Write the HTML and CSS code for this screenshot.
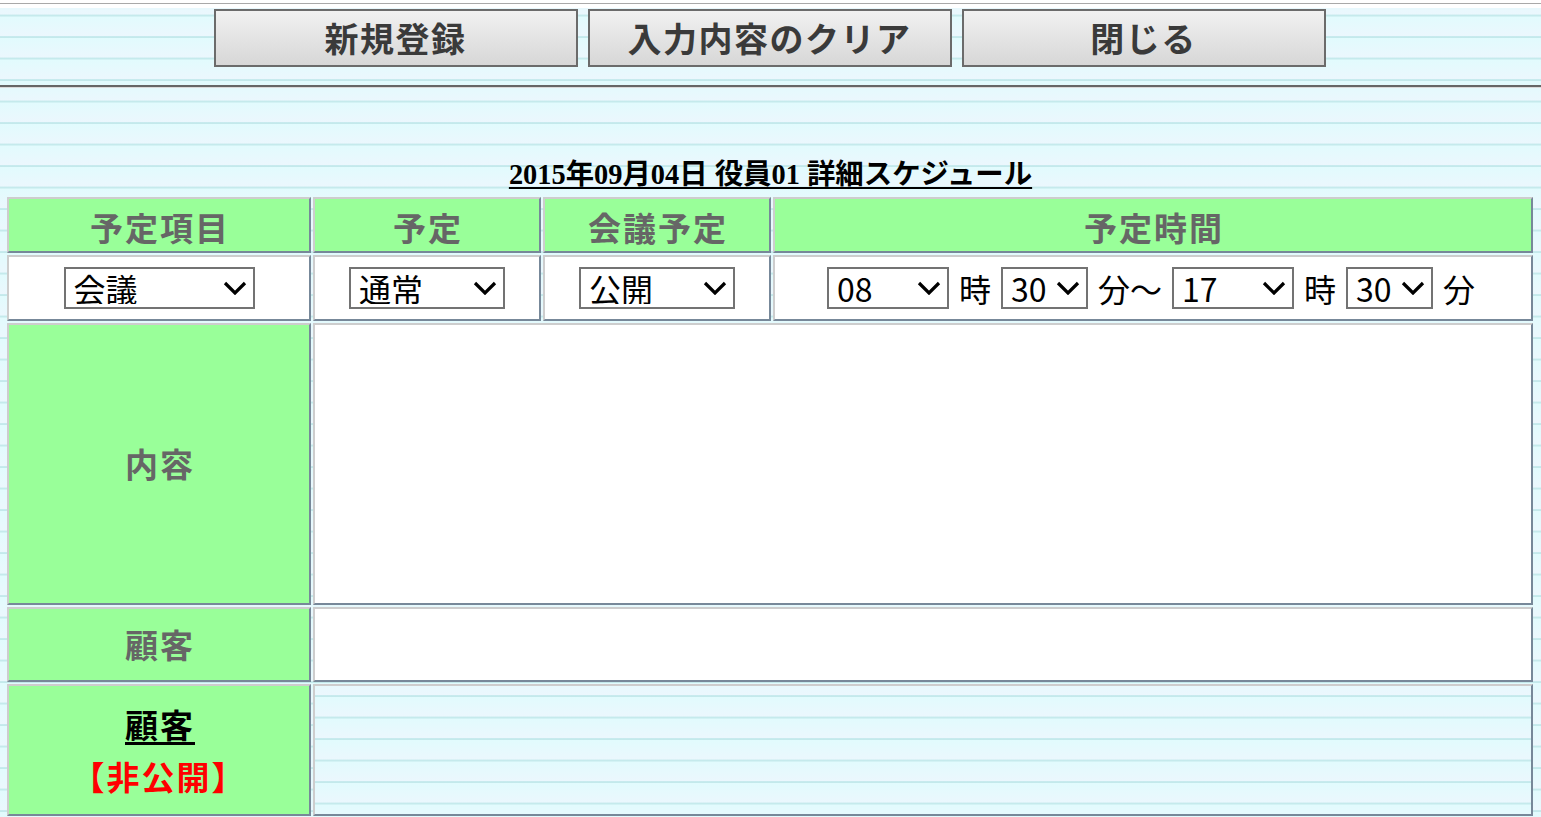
FILE: index.html
```html
<!DOCTYPE html>
<html lang="ja">
<head>
<meta charset="utf-8">
<title>詳細スケジュール</title>
<link rel="stylesheet" href="styles.css">
</head>
<body>
<div class="topstrip"></div>
<header class="toolbar">
  <button class="tbtn" type="button">新規登録</button>
  <button class="tbtn" type="button">入力内容のクリア</button>
  <button class="tbtn" type="button">閉じる</button>
</header>
<div class="rule"></div>
<main class="content">
  <h1 class="title">2015年09月04日 役員01 詳細スケジュール</h1>
  <div class="sched">
    <div class="cell head">予定項目</div>
    <div class="cell head">予定</div>
    <div class="cell head">会議予定</div>
    <div class="cell head">予定時間</div>

    <div class="cell field">
      <span class="sel sel-item"><select><option>会議</option></select><svg class="chev" viewBox="0 0 24 14"><path d="M2 2 L12 12 L22 2"/></svg></span>
    </div>
    <div class="cell field">
      <span class="sel sel-sm"><select><option>通常</option></select><svg class="chev" viewBox="0 0 24 14"><path d="M2 2 L12 12 L22 2"/></svg></span>
    </div>
    <div class="cell field">
      <span class="sel sel-sm"><select><option>公開</option></select><svg class="chev" viewBox="0 0 24 14"><path d="M2 2 L12 12 L22 2"/></svg></span>
    </div>
    <div class="cell field time">
      <span class="sel sel-hour"><select><option>08</option></select><svg class="chev" viewBox="0 0 24 14"><path d="M2 2 L12 12 L22 2"/></svg></span>
      <span class="unit">時</span>
      <span class="sel sel-min"><select><option>30</option></select><svg class="chev" viewBox="0 0 24 14"><path d="M2 2 L12 12 L22 2"/></svg></span>
      <span class="unit">分〜</span>
      <span class="sel sel-hour"><select><option>17</option></select><svg class="chev" viewBox="0 0 24 14"><path d="M2 2 L12 12 L22 2"/></svg></span>
      <span class="unit">時</span>
      <span class="sel sel-min"><select><option>30</option></select><svg class="chev" viewBox="0 0 24 14"><path d="M2 2 L12 12 L22 2"/></svg></span>
      <span class="unit">分</span>
    </div>

    <div class="cell label">内容</div>
    <div class="cell white span3"><textarea class="memo"></textarea></div>

    <div class="cell label">顧客</div>
    <div class="cell white span3"></div>

    <div class="cell label stack">
      <a class="link" href="#">顧客</a>
      <span class="private">【非公開】</span>
    </div>
    <div class="cell striped span3"></div>
  </div>
</main>
</body>
</html>
```
FILE: styles.css
```css
html, body {
  margin: 0;
  padding: 0;
}
body {
  width: 1541px;
  height: 817px;
  overflow: hidden;
  font-family: "Noto Sans CJK JP", "Noto Sans", sans-serif;
  background-color: #e6f9fc;
  background-image: linear-gradient(to bottom, #e1fbfd 0, #ebf7fd 19.5px, #c8ebee 19.5px, #c2e8ea 21.5px);
  background-size: 100% 21.5px;
  background-position: 0 -5px;
}
.topstrip {
  height: 8px;
  background: linear-gradient(to bottom, #fff 0, #fff 3px, #a9a9a9 3px, #a9a9a9 4px, #fff 4px, #fff 8px);
}
.toolbar {
  height: 77px;
  box-sizing: border-box;
  padding-top: 1px;
  display: flex;
  justify-content: center;
  align-items: flex-start;
  gap: 10px;
  padding-right: 2px;
}
.tbtn {
  width: 364px;
  height: 58px;
  border: 2px solid #6b6b6b;
  background: linear-gradient(to bottom, #f1f1f1, #d7d7d7);
  font-family: "Noto Sans CJK JP", sans-serif;
  font-size: 34px;
  font-weight: 700;
  letter-spacing: 1.5px;
  color: #3a3a3a;
  padding: 0;
  line-height: 1;
  cursor: pointer;
}
.rule {
  border-top: 2px solid #666;
  border-bottom: 1px solid #dadada;
}
.content {
  padding-top: 71px;
}
.title {
  margin: 0;
  text-align: center;
  font-family: "Liberation Serif", "Noto Sans CJK JP", serif;
  font-size: 28.4px;
  font-weight: 700;
  line-height: 32px;
  color: #000;
  text-decoration: underline;
  text-underline-offset: 3px;
  text-decoration-thickness: 2px;
}
.sched {
  margin: 6px 0 0 7px;
  display: grid;
  grid-template-columns: 304px 228px 228px 760px;
  grid-template-rows: 56px 66px 282px 75px 132px;
  gap: 2px;
}
.cell {
  box-sizing: border-box;
  border: 2px solid;
  border-color: #cdcdcd #778899 #778899 #cdcdcd;
  display: flex;
  align-items: center;
  justify-content: center;
}
.head, .label {
  background: #99ff99;
  color: #666;
  font-size: 33px;
  font-weight: 700;
  letter-spacing: 2px;
  padding-left: 2px;
}
.head {
  padding-top: 3px;
}
.label {
  padding-bottom: 2px;
}
.field {
  background: #fff;
}
.white {
  background: #fff;
}
.span3 {
  grid-column: 2 / 5;
}
.striped {
  background-color: #e6f9fc;
  background-image: linear-gradient(to bottom, #e1fbfd 0, #ebf7fd 19.5px, #c8ebee 19.5px, #c2e8ea 21.5px);
  background-size: 100% 21.5px;
  background-position: 0 -10.5px;
}
.memo {
  width: 100%;
  height: 100%;
  border: none;
  resize: none;
  background: transparent;
  outline: none;
  padding: 0;
  margin: 0;
}
.stack {
  flex-direction: column;
  gap: 10px;
  padding-bottom: 0;
}
.link {
  color: #000;
  text-decoration: underline;
  text-underline-offset: 4px;
  line-height: 42px;
}
.private {
  color: #ff0000;
  font-size: 33px;
  letter-spacing: 2px;
  line-height: 42px;
  margin-right: 2px;
}
.sel {
  position: relative;
  display: inline-block;
  height: 42px;
}
.sel select {
  appearance: none;
  -webkit-appearance: none;
  width: 100%;
  height: 42px;
  box-sizing: border-box;
  border: 2px solid #737373;
  border-radius: 0;
  background: #fff;
  color: #000;
  font-family: "Noto Sans CJK JP", sans-serif;
  font-size: 32px;
  line-height: 1;
  padding: 0 0 0 8px;
  margin: 0;
}
.sel-item { width: 191px; }
.sel-sm { width: 156px; }
.sel-hour { width: 122px; }
.sel-min { width: 87px; }
.chev {
  position: absolute;
  right: 8px;
  top: 14px;
  width: 24px;
  height: 14px;
  fill: none;
  stroke: #000;
  stroke-width: 3.2;
  pointer-events: none;
}
.time {
  gap: 10px;
  padding-right: 4px;
}
.unit {
  font-size: 32px;
  color: #000;
  line-height: 42px;
}
```
